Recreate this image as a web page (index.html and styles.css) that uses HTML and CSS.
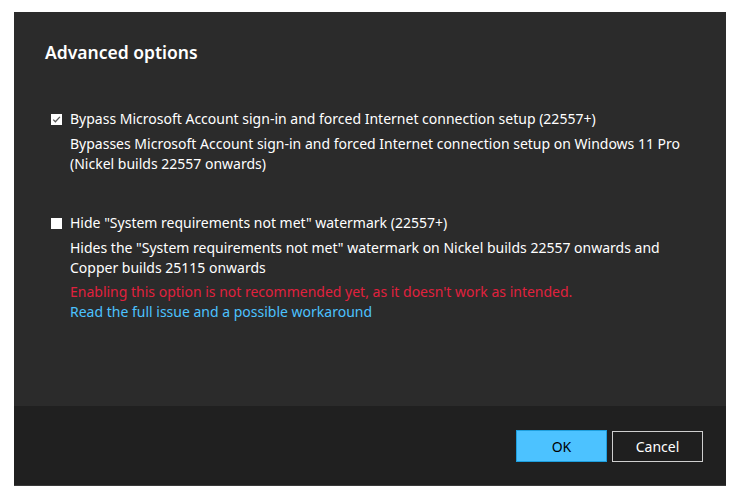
FILE: index.html
```html
<!DOCTYPE html>
<html>
<head>
<meta charset="utf-8">
<link rel="stylesheet" href="styles.css">
</head>
<body>
<div class="dialog">
  <div class="content">
    <h1 class="title">Advanced options</h1>
    <div class="option">
      <div class="label-row">
        <span class="check checked">
          <svg width="11" height="11" viewBox="0 0 11 11"><path d="M2.2 5.6 L4.4 7.8 L8.9 2.9" fill="none" stroke="#5a5a5a" stroke-width="1.3"/></svg>
        </span>
        <span class="label">Bypass Microsoft Account sign-in and forced Internet connection setup (22557+)</span>
      </div>
      <div class="desc">Bypasses Microsoft Account sign-in and forced Internet connection setup on Windows 11 Pro<br>(Nickel builds 22557 onwards)</div>
    </div>
    <div class="option second">
      <div class="label-row">
        <span class="check"></span>
        <span class="label">Hide "System requirements not met" watermark (22557+)</span>
      </div>
      <div class="desc">Hides the "System requirements not met" watermark on Nickel builds 22557 onwards and<br>Copper builds 25115 onwards</div>
      <div class="desc warn">Enabling this option is not recommended yet, as it doesn't work as intended.</div>
      <div class="desc link">Read the full issue and a possible workaround</div>
    </div>
  </div>
  <div class="footer">
    <button class="btn primary">OK</button>
    <button class="btn secondary">Cancel</button>
  </div>
</div>
</body>
</html>
```
FILE: styles.css
```css
html, body {
  margin: 0;
  padding: 0;
  background: #ffffff;
}
body {
  padding: 12px 0 0 14px;
  font-family: "Noto Sans", "Open Sans", sans-serif;
  color: #ffffff;
}
.dialog {
  width: 712px;
  height: 474px;
  background: #2b2b2b;
  display: flex;
  flex-direction: column;
  border-bottom: 1px solid #3a3a3a;
  box-sizing: border-box;
}
.content {
  flex: 1;
  padding: 28px 0 0 31px;
}
.title {
  margin: 0;
  font-size: 17.5px;
  font-weight: 600;
  line-height: 24px;
}
.option {
  margin-top: 45px;
  font-size: 14px;
}
.option.second {
  margin-top: 39px;
}
.label-row {
  display: flex;
  align-items: center;
  height: 20px;
}
.check {
  width: 11px;
  height: 11px;
  background: #ffffff;
  margin: 0 8px 0 6px;
  display: inline-block;
  flex: none;
}
.check svg {
  display: block;
}
.label, .desc {
  font-size: 14px;
  line-height: 20px;
}
.desc {
  padding-left: 25px;
}
.label-row + .desc {
  margin-top: 5px;
}
.warn {
  color: #e0213e;
  margin-top: 4px;
}
.link {
  color: #4cc2ff;
}
.footer {
  height: 79px;
  background: #202020;
  display: flex;
  justify-content: flex-end;
  align-items: flex-start;
  padding: 24px 23px 0 0;
  box-sizing: border-box;
  gap: 5px;
}
.btn {
  width: 91px;
  height: 32px;
  font-family: inherit;
  font-size: 14px;
  padding: 0;
  box-sizing: border-box;
}
.primary {
  background: #4cc2ff;
  border: 1px solid #1e9fde;
  color: #000000;
}
.secondary {
  background: #1f1f1f;
  border: 1px solid #cfcfcf;
  color: #ffffff;
  height: 31px;
  margin-top: 1px;
}
```
